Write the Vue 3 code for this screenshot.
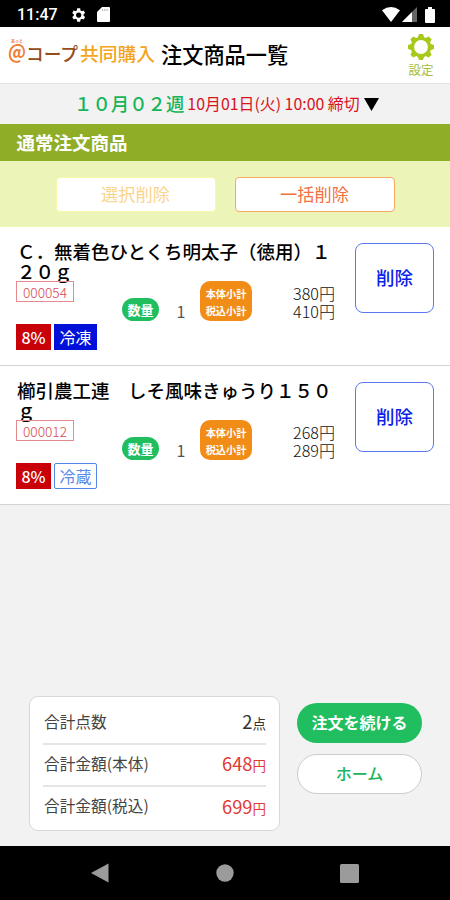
<template>
  <div class="screen">
    <div class="status-bar">
      <span class="clock">11:47</span>
      <svg class="status-gear" viewBox="0 0 24 24" width="18" height="18">
        <path fill="#fff" fill-rule="evenodd" d="M19.4 13a7.500 7.500 0 0 0 0-2l2.100-1.650-2-3.460-2.500 1a7.300 7.300 0 0 0-1.700-1L14.900 3h-4l-.4 2.890a7.300 7.300 0 0 0-1.700 1l-2.500-1-2 3.460L6.400 11a7.500 7.500 0 0 0 0 2l-2.100 1.650 2 3.460 2.500-1a7.300 7.300 0 0 0 1.700 1l.4 2.890h4l.4-2.890a7.300 7.300 0 0 0 1.700-1l2.500 1 2-3.460zM12.900 15.500a3.500 3.500 0 1 1 0-7 3.500 3.500 0 0 1 0 7z" />
      </svg>
      <svg class="status-sd" viewBox="0 0 13 15" width="13" height="15">
        <path fill="#fff" d="M5 0h7a1 1 0 0 1 1 1v13a1 1 0 0 1-1 1H1a1 1 0 0 1-1-1V5z" />
        <path stroke="#999" stroke-width=".8" d="M5.500 2v2M7.800 2v2M10.100 2v2" />
      </svg>
      <div class="status-right">
        <svg viewBox="0 0 18 15" width="18" height="15">
          <path fill="#fff" d="M0 3.200Q9-3.200 18 3.200L9 15z" />
        </svg>
        <svg viewBox="0 0 15 15" width="15" height="15">
          <path fill="#666" d="M15 0v15H0z" />
          <path fill="#fff" d="M10 5v10H0z" />
        </svg>
        <svg class="battery" viewBox="0 0 10 16" width="10" height="16">
          <path fill="#fff" d="M3 0h4v2h2a1 1 0 0 1 1 1v12a1 1 0 0 1-1 1H1a1 1 0 0 1-1-1V3a1 1 0 0 1 1-1h2z" />
        </svg>
      </div>
    </div>

    <header class="header">
      <svg class="logo" viewBox="0 0 150 28" width="150" height="28">
        <text class="logo-ruby" x="3" y="4" textLength="12">あっと</text>
        <text class="logo-at" x="0" y="20" textLength="18" lengthAdjust="spacingAndGlyphs">@</text>
        <text class="logo-coop" x="18" y="22" textLength="52" lengthAdjust="spacingAndGlyphs">コープ</text>
        <text class="logo-name" x="72" y="22" textLength="75" lengthAdjust="spacingAndGlyphs">共同購入</text>
      </svg>
      <h1>注文商品一覧</h1>
      <div class="settings">
        <svg viewBox="-13 -13 26 26" width="26" height="26">
          <g fill="#a8c81c">
            <path v-for="n in 8" :key="n" :transform="`rotate(${n * 45})`" d="M-3.500-8.500L-2-13h4l1.500 4.500z" />
          </g>
          <circle r="8.600" fill="#fff" stroke="#a8c81c" stroke-width="3.400" />
        </svg>
        <span>設定</span>
      </div>
    </header>

    <div class="period">
      <span class="week">１０月０２週</span>
      <span class="deadline">10月01日(火) 10:00 締切</span>
      <svg viewBox="0 0 15 13" width="15" height="13"><path d="M0 0h15L7.500 13z" /></svg>
    </div>

    <h2 class="section-title">通常注文商品</h2>
    <div class="bulk">
      <button class="bulk-btn disabled">選択削除</button>
      <button class="bulk-btn">一括削除</button>
    </div>

    <div v-for="item in items" :key="item.code" class="item">
      <div class="item-main">
        <div class="item-name">{{ item.name }}</div>
        <div class="detail">
          <div class="code">{{ item.code }}</div>
          <div class="qty-label">数量</div>
          <div class="qty">{{ item.qty }}</div>
          <div class="subtotal-label">
            <span>本体小計</span>
            <span>税込小計</span>
          </div>
          <div class="prices">
            <span>{{ item.price }}円</span>
            <span>{{ item.taxed }}円</span>
          </div>
        </div>
        <div class="tags">
          <span class="tag tax">8%</span>
          <span :class="`tag ${item.tempClass}`">{{ item.temp }}</span>
        </div>
      </div>
      <button class="delete">削除</button>
    </div>

    <div class="footer">
      <div class="totals">
        <div v-for="row in totals" :key="row.label" class="total-row">
          <span>{{ row.label }}</span>
          <span :class="{ amount: true, red: row.red }">{{ row.value }}<small>{{ row.unit }}</small></span>
        </div>
      </div>
      <div class="actions">
        <button class="continue">注文を続ける</button>
        <button class="home">ホーム</button>
      </div>
    </div>

    <nav class="nav-bar">
      <svg viewBox="0 0 18 20" width="18" height="20"><path fill="#9b9b9b" d="M17.500 .5v19L0 10z" /></svg>
      <svg viewBox="0 0 18 18" width="18" height="18"><circle cx="9" cy="9" r="8.700" fill="#9b9b9b" /></svg>
      <svg viewBox="0 0 19 19" width="19" height="19"><rect width="19" height="19" rx="1.500" fill="#9b9b9b" /></svg>
    </nav>
  </div>
</template>

<script setup>
import { ref } from 'vue'

const items = ref([
  {
    name: 'Ｃ．無着色ひとくち明太子（徳用）１２０ｇ',
    code: '000054',
    qty: 1,
    price: 380,
    taxed: 410,
    temp: '冷凍',
    tempClass: 'frozen'
  },
  {
    name: '櫛引農工連　しそ風味きゅうり１５０ｇ',
    code: '000012',
    qty: 1,
    price: 268,
    taxed: 289,
    temp: '冷蔵',
    tempClass: 'chilled'
  }
])

const totals = ref([
  { label: '合計点数', value: 2, unit: '点', red: false },
  { label: '合計金額(本体)', value: 648, unit: '円', red: true },
  { label: '合計金額(税込)', value: 699, unit: '円', red: true }
])
</script>

<style>
body {
  background: #f2f2f2;
}
</style>

<style scoped>
* {
  box-sizing: border-box;
}
.screen {
  width: 450px;
  height: 900px;
  display: flex;
  flex-direction: column;
  overflow: hidden;
  background: #f2f2f2;
  color: #000;
  font-family: "Noto Sans CJK JP", sans-serif;
}
button {
  font-family: inherit;
  padding: 0;
  background: #fff;
}
svg {
  display: block;
  flex: none;
}
.status-bar {
  height: 27px;
  flex: none;
  display: flex;
  align-items: center;
  background: #000;
  padding: 2px 15px 0 17px;
}
.clock {
  color: #fff;
  font: 500 16px/20px Roboto, sans-serif;
  width: 52px;
}
.status-sd {
  margin-left: 10px;
}
.status-right {
  margin-left: auto;
  display: flex;
  align-items: center;
  gap: 2px;
}
.battery {
  margin-left: 6px;
}
.header {
  height: 57px;
  flex: none;
  display: flex;
  align-items: center;
  padding: 0 16px 0 8px;
  background: #fff;
  border-bottom: 1px solid #e3e3e3;
}
.logo {
  margin-top: -5px;
  overflow: visible;
}
.logo-ruby {
  font-size: 4px;
  font-weight: 700;
  fill: #f07840;
}
.logo-at {
  font-size: 19.500px;
  font-weight: 700;
  fill: #ef7d32;
}
.logo-coop {
  font-size: 18px;
  font-weight: 500;
  fill: #944c18;
}
.logo-name {
  font-size: 18px;
  font-weight: 500;
  fill: #f3a51d;
}
h1 {
  margin: -2px 0 0 3px;
  font-size: 21.200px;
  line-height: 30px;
  font-weight: 500;
}
.settings {
  margin-left: auto;
  padding-top: 2px;
  display: flex;
  flex-direction: column;
  align-items: center;
  color: #a4bd3a;
  font-size: 12.500px;
  line-height: 16px;
}
.settings span {
  margin-top: 2px;
}
.period {
  height: 40px;
  flex: none;
  display: flex;
  align-items: center;
  padding-left: 74px;
}
.week {
  margin-top: -2px;
  color: #17b559;
  font-size: 18.400px;
  font-weight: 500;
  line-height: 26px;
}
.deadline {
  margin: 0 4px 0 3px;
  color: #d9131b;
  font-size: 15.900px;
  line-height: 22px;
  white-space: nowrap;
}
.section-title {
  margin: 0;
  height: 37px;
  flex: none;
  padding-left: 16.500px;
  background: #8fad27;
  color: #fff;
  font-size: 18.500px;
  line-height: 37px;
  font-weight: 700;
}
.bulk {
  height: 66px;
  flex: none;
  display: flex;
  justify-content: center;
  align-items: center;
  gap: 19px;
  background: #edf4b8;
}
.bulk-btn {
  width: 160px;
  height: 35px;
  border: 1px solid #f5a960;
  border-radius: 4px;
  color: #f27040;
  font-size: 17.200px;
  line-height: 32px;
}
.bulk-btn.disabled {
  border-color: #fbf7a8;
  color: #fbd48c;
}
.item {
  height: 139px;
  flex: none;
  display: flex;
  justify-content: space-between;
  padding: 14px 16px 0;
  background: #fff;
  border-bottom: 1px solid #d4d4d4;
}
.item-main {
  width: 320px;
}
.item-name {
  height: 40px;
  padding-left: 1px;
  font-size: 18.500px;
  line-height: 20px;
  font-weight: 500;
}
.detail {
  height: 43px;
  display: flex;
  align-items: flex-start;
}
.code {
  width: 58px;
  height: 21px;
  border: 1px solid #e58a8f;
  color: #d64953;
  font-size: 13.700px;
  line-height: 20px;
  font-weight: 300;
  text-align: center;
}
.qty-label {
  width: 37px;
  height: 23px;
  margin: 17px 0 0 48px;
  border-radius: 12px;
  background: #20be5f;
  color: #fff;
  font-size: 13px;
  line-height: 23px;
  font-weight: 700;
  text-align: center;
}
.qty {
  width: 41px;
  margin-top: 20px;
  padding-left: 3px;
  color: #555;
  font-size: 16px;
  line-height: 21px;
  text-align: center;
}
.subtotal-label {
  width: 52px;
  height: 40px;
  display: flex;
  flex-direction: column;
  align-items: center;
  padding-top: 4px;
  border-radius: 10px;
  background: #f18d17;
  color: #fff;
  font-size: 10.200px;
  line-height: 17px;
  font-weight: 700;
}
.prices {
  width: 83px;
  margin-top: 3px;
  display: flex;
  flex-direction: column;
  color: #111;
  font-size: 16.100px;
  line-height: 18px;
  font-weight: 300;
  text-align: right;
}
.tags {
  display: flex;
  gap: 3px;
}
.tag {
  width: 43px;
  height: 26px;
  border: 1px solid;
  font-size: 16px;
  line-height: 24px;
  text-align: center;
}
.tag.tax {
  width: 35px;
  background: #ca0008;
  border-color: #ca0008;
  color: #fff;
  font-weight: 500;
}
.tag.frozen {
  background: #0010d8;
  border-color: #0010d8;
  color: #fff;
}
.tag.chilled {
  border-color: #5585e8;
  border-radius: 2px;
  color: #5a8cec;
}
.delete {
  width: 79px;
  height: 70px;
  margin-top: 2px;
  padding-bottom: 2px;
  border: 1px solid #5b78ee;
  border-radius: 8px;
  color: #0b22e8;
  font-size: 18.500px;
  font-weight: 500;
}
.footer {
  height: 150px;
  flex: none;
  margin-top: auto;
  display: flex;
  gap: 17px;
  padding-left: 29px;
}
.totals {
  width: 251px;
  height: 135px;
  padding: 3px 13px 0;
  border: 1.500px solid #d8d8d8;
  border-radius: 9px;
  background: #fff;
}
.total-row {
  height: 42.500px;
  display: flex;
  justify-content: space-between;
  align-items: center;
  padding: 0 0 3px 1px;
  color: #444;
  font-size: 15.700px;
}
.total-row:first-child {
  padding-bottom: 0;
}
.total-row + .total-row {
  border-top: 2px solid #e5e5e5;
}
.amount {
  color: #333;
  font-size: 18.300px;
}
.amount small {
  font-size: 13.500px;
}
.amount.red {
  color: #df3a35;
}
.actions {
  display: flex;
  flex-direction: column;
  gap: 11px;
  padding-top: 7px;
}
.actions button {
  width: 125px;
  height: 40px;
  padding-bottom: 2px;
  border-radius: 20px;
  font-size: 16px;
  line-height: 36px;
}
.continue {
  border: none;
  background: #20be5f;
  color: #fff;
  font-weight: 700;
}
.home {
  border: 1px solid #ccc;
  color: #20b45a;
  font-weight: 500;
}
.nav-bar {
  height: 54px;
  flex: none;
  display: flex;
  align-items: center;
  justify-content: space-between;
  padding: 0 91px;
  background: #000;
}
</style>
